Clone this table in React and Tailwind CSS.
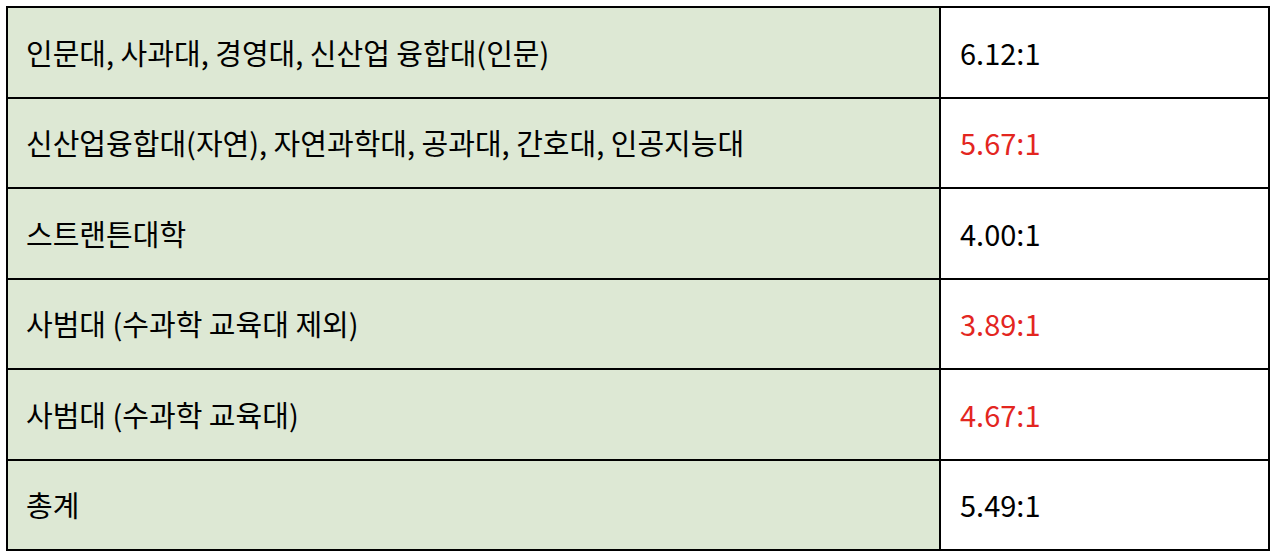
const rows = [
  { name: '인문대, 사과대, 경영대, 신산업 융합대(인문)', ratio: '6.12:1', red: false },
  { name: '신산업융합대(자연), 자연과학대, 공과대, 간호대, 인공지능대', ratio: '5.67:1', red: true },
  { name: '스트랜튼대학', ratio: '4.00:1', red: false },
  { name: '사범대 (수과학 교육대 제외)', ratio: '3.89:1', red: true },
  { name: '사범대 (수과학 교육대)', ratio: '4.67:1', red: true },
  { name: '총계', ratio: '5.49:1', red: false },
];

export default function App() {
  return (
    <div className="min-h-screen bg-white p-[6px] font-['Noto_Sans_CJK_KR','Noto_Sans',sans-serif]">
      <div className="w-[1264px] border-2 border-black">
        <div className="grid grid-cols-[933px_1fr]">
          {rows.map((row, i) => {
            const last = i === rows.length - 1;
            return [
              <div
                key={`n${i}`}
                className={`flex items-center border-r-2 border-black bg-[#dde8d4] pl-[18px] text-[29px] text-black ${
                  last ? 'h-[88.5px]' : 'h-[90.5px] border-b-2'
                }`}
              >
                {row.name}
              </div>,
              <div
                key={`r${i}`}
                className={`flex items-center border-black bg-white pl-[19px] text-[29px] ${
                  row.red ? 'text-[#e3261f]' : 'text-black'
                } ${last ? 'h-[88.5px]' : 'h-[90.5px] border-b-2'}`}
              >
                {row.ratio}
              </div>,
            ];
          })}
        </div>
      </div>
    </div>
  );
}
